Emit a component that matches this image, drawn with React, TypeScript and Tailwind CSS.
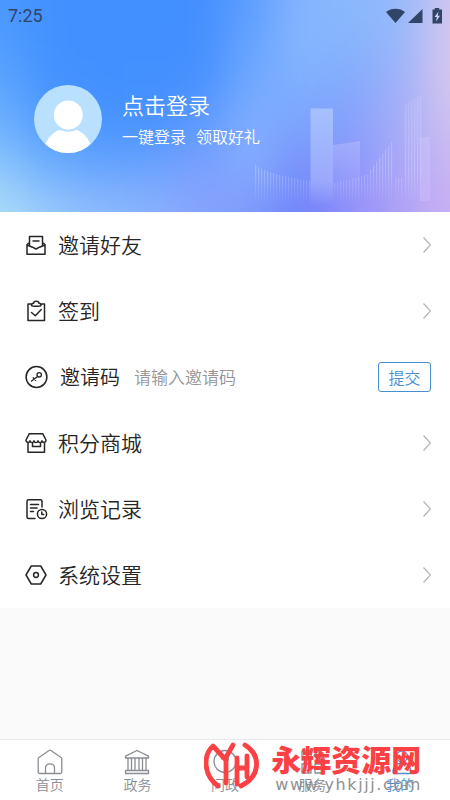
import type { ReactNode } from 'react';

const iconProps = {
  fill: 'none',
  stroke: 'currentColor',
  strokeWidth: 1.5,
  strokeLinecap: 'round' as const,
  strokeLinejoin: 'round' as const,
  viewBox: '0 0 24 24',
  className: 'size-6 shrink-0',
  'aria-hidden': true,
};

const InviteIcon = () => (
  <svg {...iconProps}>
    <path d="M5.500 9.500 3 11.500v9.700h18v-9.700L18.500 9.500M5.500 12.500V3.500h13v9M9 8h6M3 12l5.500 2.200 3.500 1.800 3.500-1.800L21 12" />
  </svg>
);
const SignIcon = () => (
  <svg {...iconProps}>
    <path d="M7 5H4v16.500h16.500V5H17.500M7.500 6.500c0-1.500 1-2.200 2-2.200C9.800 1.500 14.700 1.500 15 4.300c1 0 2 .7 2 2.200-1 1-8.500 1-9.500 0zM7.500 13.500l3.800 3.300 6-6.300" />
  </svg>
);
const KeyIcon = () => (
  <svg {...iconProps}>
    <circle cx="12.500" cy="12" r="10.400" />
    <g strokeWidth="1.300">
      <circle cx="15.200" cy="9.800" r="2.200" />
      <path d="m13.600 11.400-6 4.600M9.200 12.700l2.400 2.700" />
    </g>
  </svg>
);
const ShopIcon = () => (
  <svg {...iconProps}>
    <path d="M5.300 2.700h13.400L22 9c0 3-3.700 3-4 .8-.4 2.400-3.500 2.400-4 0-.5 2.400-3.500 2.400-4 0-.4 2.400-3.600 2.400-4 0-.4 2.200-4 2.200-4-.8zM4 12v9.200h16.500V12M8.500 12v3.500h8V12" />
  </svg>
);
const HistoryIcon = () => (
  <svg {...iconProps}>
    <path d="M11 21.500H4.500C3.500 21.500 3 21 3 20V4.200C3 3.200 3.500 2.700 4.500 2.700h12c1 0 1.500.5 1.500 1.500V10M6.500 7.500h8M6.500 11h6.500M6.500 14.500h3" />
    <circle cx="18" cy="17" r="4.600" />
    <path d="M17.800 14.900v2.500h1.900" />
  </svg>
);
const SettingIcon = () => (
  <svg {...iconProps}>
    <path d="M7.300 3h9.400l5.300 9-5.300 9H7.300L2 12z" />
    <circle cx="12" cy="12" r="2.400" />
  </svg>
);

const Chevron = () => (
  <svg className="h-4 w-2 shrink-0 text-[#b4b4b4]" viewBox="0 0 8 16" fill="none" stroke="currentColor" strokeWidth="1.200" aria-hidden>
    <path d="m.5.5 7 7.500-7 7.500" />
  </svg>
);

function MenuLink({ icon, label }: { icon: ReactNode; label: string }) {
  return (
    <li>
      <a href="#" className="flex h-[66px] items-center pr-[19px] pl-6">
        {icon}
        <span className="ml-2.5 flex-1 pb-0.5 text-[21px] leading-8">{label}</span>
        <Chevron />
      </a>
    </li>
  );
}

const tabIcon = {
  fill: 'none',
  stroke: 'currentColor',
  strokeWidth: 1.3,
  strokeLinejoin: 'round' as const,
  strokeLinecap: 'round' as const,
  viewBox: '0 0 26 26',
  className: 'size-[26px]',
  'aria-hidden': true,
};

const tabs = [
  {
    label: '首页',
    icon: (
      <svg {...tabIcon}>
        <path d="M1.200 9.500Q1.200 9 2 8.500L12 1.500q1-.6 2 0l10 7q.8.5.8 1V23q0 1.500-1.500 1.500H2.700Q1.200 24.500 1.200 23zM8.500 24.500V19c0-5.500 9-5.500 9 0v5.500" />
      </svg>
    ),
  },
  {
    label: '政务',
    icon: (
      <svg {...tabIcon}>
        <path d="M1.500 9V7.200L13 1.500l11.500 5.700V9zM1.500 24.500v-3h23v3zM4 9v12.500M7.500 9v12.500M11 9v12.500M15 9v12.500M18.500 9v12.500M22 9v12.500" />
      </svg>
    ),
  },
  {
    label: '问政',
    icon: (
      <svg {...tabIcon}>
        <circle cx="13" cy="12.500" r="11" />
        <path d="M9.500 10c0-4.500 7-4.500 7 0 0 2.500-3.500 2.500-3.500 5.500M13 18.500v.5" />
      </svg>
    ),
  },
  {
    label: '服务',
    icon: (
      <svg {...tabIcon}>
        <path d="M2 2h9v9H2zM2 15h9v9H2zM15 15h9v9h-9zM19.500 1l5.500 5.500-5.500 5.500L14 6.500z" />
      </svg>
    ),
  },
  {
    label: '我的',
    active: true,
    icon: (
      <svg {...tabIcon}>
        <circle cx="15" cy="7.500" r="5.500" />
        <path d="M6 23c0-12 18-12 18 0q0 1.500-1.500 1.500h-15Q6 24.500 6 23z" />
      </svg>
    ),
  },
];

const skyColors = [
  ['#4a98ff', '#4291ff', '#428fff', '#428fff', '#438fff', '#5c9dff', '#84b4fe', '#8ab8fd', '#94b9fb', '#d2c5f0'],
  ['#519cff', '#4291ff', '#428fff', '#428fff', '#448fff', '#65a3ff', '#86b6fe', '#86b4fd', '#98b6fa', '#d8c8ee'],
  ['#5ea6fe', '#4593ff', '#428fff', '#4390ff', '#4891ff', '#72a9ff', '#80b0fe', '#82a9fc', '#a0b0f9', '#d6c6ee'],
  ['#70b2fd', '#529cff', '#4a95ff', '#4a93ff', '#5e9aff', '#80afff', '#7ba2fd', '#86a0fb', '#a6adf8', '#cfc0f0'],
  ['#8dc7fc', '#70affd', '#68a5fe', '#6ca4fe', '#7d9ffe', '#85abfe', '#7690fb', '#8b95fa', '#aaa6f8', '#cab7f1'],
  ['#acdcfa', '#98c8fc', '#8dbafd', '#8ab2fd', '#85a3fd', '#7e9cfc', '#7082f9', '#938ffa', '#b0a1f7', '#c8b1f2'],
];

function Sky() {
  return (
    <svg className="absolute inset-0 size-full" viewBox="0 0 450 212" preserveAspectRatio="none" aria-hidden>
      <defs>
        <filter id="soften" filterUnits="userSpaceOnUse" x="-100" y="-100" width="650" height="412" colorInterpolationFilters="sRGB">
          <feGaussianBlur stdDeviation="21" />
        </filter>
      </defs>
      <g filter="url(#soften)">
        <path d="M-100-100h650v412h-650z" fill="#7fa8fd" />
        {skyColors.map((row, r) =>
          row.map((fill, c) => {
            const x = c === 0 ? -100 : c * 50 - 25;
            const right = c === 9 ? 550 : c * 50 + 26;
            const y = r === 0 ? -100 : r * 42 - 21;
            const bottom = r === 5 ? 312 : r * 42 + 22;
            return <rect key={`${r}-${c}`} x={x} y={y} width={right - x} height={bottom - y} fill={fill} />;
          }),
        )}
      </g>
    </svg>
  );
}

function Skyline() {
  const lines: { x: number; top: number }[] = [];
  for (let x = 5; x < 60; x += 3) lines.push({ x, top: 70 + Math.sqrt(x - 4) * 2.6 });
  for (let x = 84; x < 142; x += 3) lines.push({ x, top: x < 118 ? 91 - (x - 84) * 0.25 : 80 - (x - 118) * 1.3 });
  for (let x = 145; x < 154; x += 3) lines.push({ x, top: 86 });
  for (let x = 155; x < 172; x += 3) lines.push({ x, top: 13 - (x - 155) * 0.6 });
  return (
    <svg className="absolute right-0 bottom-0 h-[120px] w-[200px]" viewBox="0 0 200 120" aria-hidden>
      <defs>
        <linearGradient id="tower" x1="0" y1="0" x2="0" y2="1">
          <stop offset="0" stopColor="#bcd3ff" stopOpacity=".6" />
          <stop offset=".75" stopColor="#bcc8ff" stopOpacity=".45" />
          <stop offset="1" stopColor="#bcc8ff" stopOpacity="0" />
        </linearGradient>
        <linearGradient id="block" x1="0" y1="0" x2="0" y2="1">
          <stop offset="0" stopColor="#d0ccff" stopOpacity=".35" />
          <stop offset="1" stopColor="#c5bdff" stopOpacity="0" />
        </linearGradient>
        <linearGradient id="ray" gradientUnits="userSpaceOnUse" x1="0" y1="0" x2="0" y2="112">
          <stop offset="0" stopColor="#dcd8ff" stopOpacity=".15" />
          <stop offset=".7" stopColor="#d4dcff" stopOpacity=".36" />
          <stop offset="1" stopColor="#d4dcff" stopOpacity="0" />
        </linearGradient>
      </defs>
      {lines.map(({ x, top }) => (
        <rect key={x} x={x} y={top} width="1.200" height={112 - top} fill="url(#ray)" />
      ))}
      <path d="M83 53 110 49v65H83z" fill="url(#block)" />
      <path d="M60.500 16.500h22.500v97H60.500z" fill="url(#tower)" />
      <path d="M170 45h10v64h-10z" fill="#ded0ff" opacity=".25" />
      <path d="M154 14l18-12v112h-18z" fill="url(#block)" opacity=".4" />
    </svg>
  );
}

export default function App() {
  return (
    <div className="flex min-h-screen flex-col bg-[#fafafa] font-['Noto_Sans_CJK_SC',sans-serif] font-[350] text-[#262626]">
      <header className="relative h-[212px] overflow-hidden">
        <Sky />
        <Skyline />
        <div className="relative flex h-8 items-center justify-between pr-[7px] pl-2 text-[#304568]">
          <span className="font-[Roboto,sans-serif] text-lg font-normal leading-8">7:25</span>
          <svg className="h-[17px] w-[58px]" viewBox="0 0 58 17" fill="currentColor" aria-hidden>
            <path d="M1 4C6-.5 15-.5 20 4L10.500 15zM37.500 1v14H23zM47.500 1.500h2.300V-1h4.400v2.500H57V15.500h-9.500z" />
            <path d="M53.500 3.500 49.500 9h2.300l-.8 4.500 4-5.800h-2.300z" fill="#d4d0f4" />
          </svg>
        </div>
        <a href="#" className="relative flex items-center pt-[53px] pl-[34px] text-white">
          <svg className="size-[68px] shrink-0" viewBox="0 0 68 68" aria-hidden>
            <defs>
              <clipPath id="avatar"><circle cx="34" cy="34" r="34" /></clipPath>
            </defs>
            <g clipPath="url(#avatar)">
              <path d="M0 0h68v68H0z" fill="#b9e0ff" />
              <circle cx="34.300" cy="30" r="14.500" fill="#fff" />
              <path d="M10 62c4-10 10-16 16-17q8 3.500 16 0c6 1 12 7 16 17v10H10z" fill="#fff" />
            </g>
          </svg>
          <div className="ml-5 pt-0.5">
            <p className="text-[22px] leading-8">点击登录</p>
            <p className="flex gap-2.5 text-base leading-8"><span>一键登录</span><span>领取好礼</span></p>
          </div>
        </a>
      </header>

      <main className="flex-1">
        <ul className="bg-white">
          <MenuLink icon={<InviteIcon />} label="邀请好友" />
          <MenuLink icon={<SignIcon />} label="签到" />
          <li>
            <form className="flex h-[66px] items-center pr-[19px] pl-6" onSubmit={(e) => e.preventDefault()}>
              <KeyIcon />
              <label htmlFor="invite-code" className="ml-3 text-[20px] leading-8">邀请码</label>
              <input
                id="invite-code"
                placeholder="请输入邀请码"
                className="ml-3.5 min-w-0 flex-1 text-[17px] leading-8 outline-none placeholder:text-[#959595]"
              />
              <button type="submit" className="h-[30px] w-[53px] rounded-[3px] border border-[#4690d2] text-base leading-7 text-[#4690d2]">
                提交
              </button>
            </form>
          </li>
          <MenuLink icon={<ShopIcon />} label="积分商城" />
          <MenuLink icon={<HistoryIcon />} label="浏览记录" />
          <MenuLink icon={<SettingIcon />} label="系统设置" />
        </ul>
      </main>

      <nav className="relative border-t border-[#e8e8e8] bg-white px-1.5">
        <div className="flex h-[60px]">
          {tabs.map((tab) => (
            <a
              key={tab.label}
              href="#"
              className={`flex flex-1 flex-col items-center pt-[9px] ${tab.active ? 'text-[#4a8fd0]' : 'text-[#8b8d96]'}`}
            >
              {tab.icon}
              <span className="text-sm leading-[18px]">{tab.label}</span>
            </a>
          ))}
        </div>
        <div className="pointer-events-none absolute top-0 right-7 flex items-start">
          <svg className="mt-0.5 h-[47px] w-[55px]" viewBox="0 0 55 47" fill="none" stroke="#fc4145" strokeWidth="4.800" strokeLinecap="round" strokeLinejoin="round" aria-hidden>
            <path d="M14 44C-1 33-1 13 9 4L21 17 29 3M22 17v24M33 16v26M33 26h10M43 14v21M41 3C57 13 57 34 37 44" />
          </svg>
          <div className="ml-3">
            <p className="font-black text-[30px] leading-9 text-[#fc4145]">永辉资源网</p>
            <p className="pl-1 font-['DejaVu_Sans',sans-serif] text-base font-normal leading-[18px] tracking-widest text-[#909090]">www.yhkjjj.com</p>
          </div>
        </div>
      </nav>
    </div>
  );
}
